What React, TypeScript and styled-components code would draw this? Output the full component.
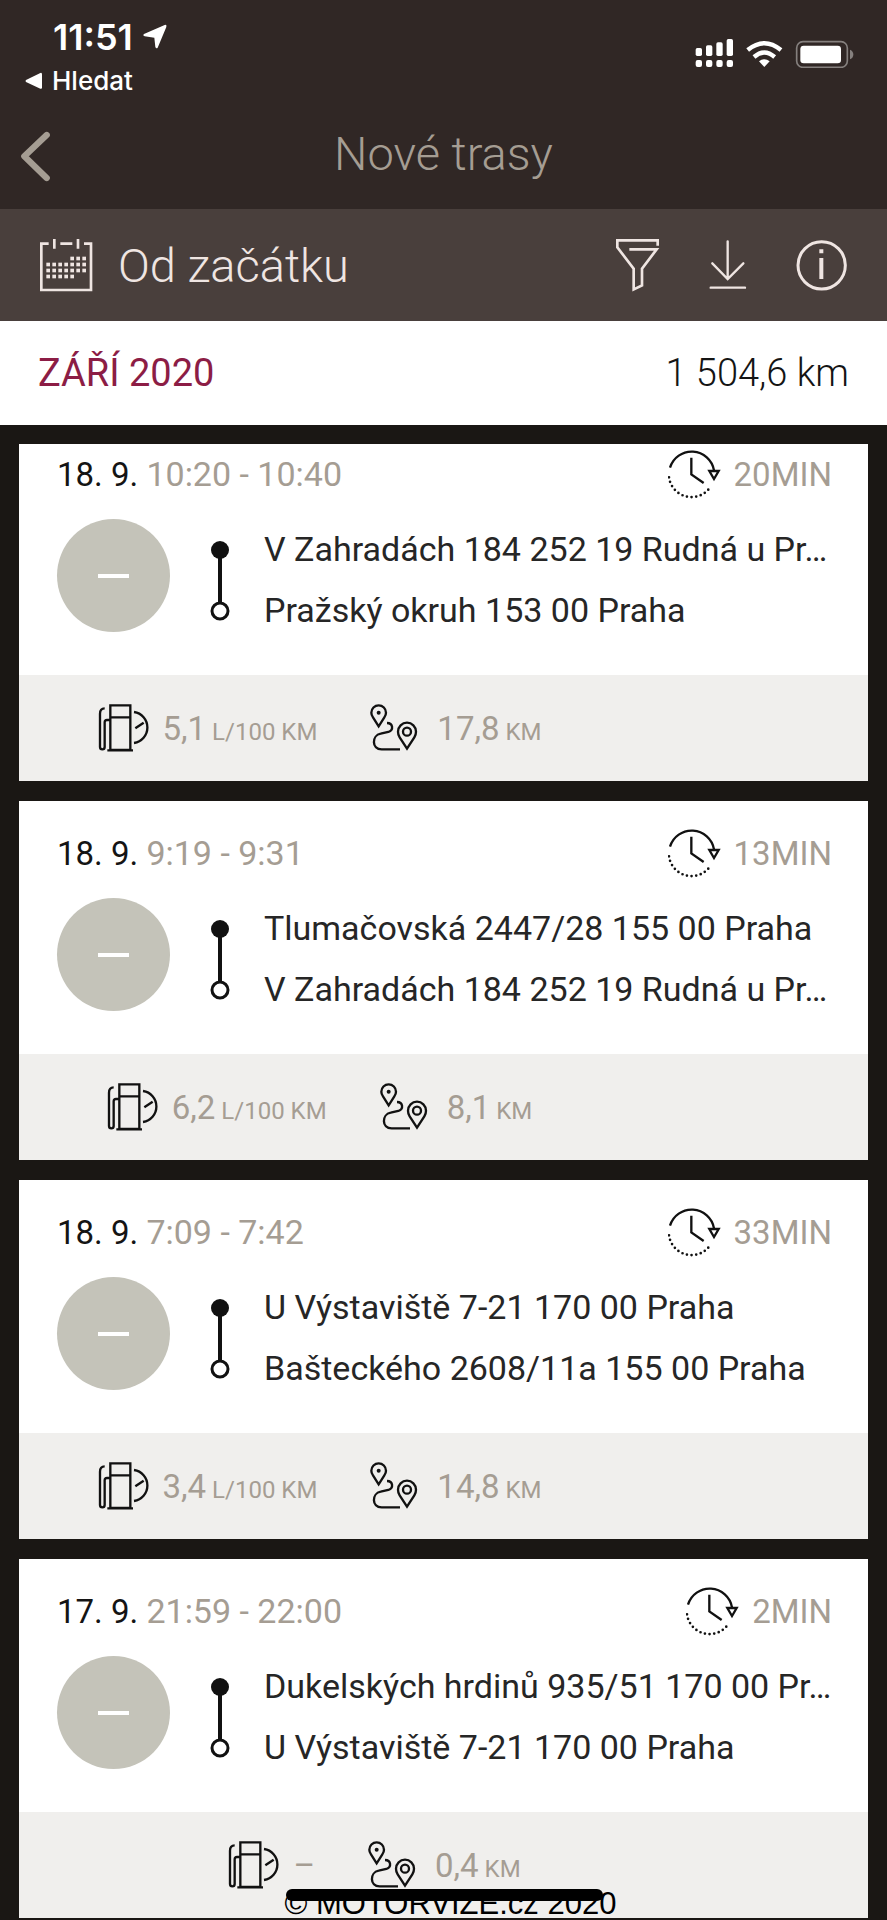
import React from 'react';
import styled, { createGlobalStyle } from 'styled-components';

const colors = {
  header: '#302725',
  toolbar: '#493f3c',
  page: '#1a1714',
  ink: '#141414',
  text: '#262626',
  muted: '#a59d93',
  accent: '#8c1d45',
  cream: '#efe5e2',
  footer: '#f0efed',
};

const GlobalStyle = createGlobalStyle`
  *, *::before, *::after { box-sizing: border-box; }
  body { margin: 0; background: ${colors.page}; font-family: Roboto, "Noto Sans", sans-serif; }
  h1, h2, p, ul { margin: 0; padding: 0; font-weight: 400; }
  ul { list-style: none; }
  button { padding: 0; border: 0; background: none; color: inherit; font: inherit; cursor: pointer; }
  svg { display: block; flex: none; }
`;

const Page = styled.div`
  position: relative;
  min-height: 100vh;
  overflow: hidden;
  background: ${colors.page};
`;

const Header = styled.header`
  background: ${colors.header};
  color: #fff;
`;

const StatusBar = styled.div`
  display: flex;
  justify-content: space-between;
  padding: 16px 32px 0 25px;
  font-family: Inter, sans-serif;
`;

const StatusLeft = styled.div`
  display: flex;
  flex-direction: column;
`;

const Clock = styled.div`
  display: flex;
  align-items: center;
  gap: 9px;
  padding-left: 28px;
  font-size: 36px;
  font-weight: 600;
  line-height: 42px;
`;

const ReturnButton = styled.button`
  display: flex;
  align-items: center;
  gap: 9px;
  font-size: 26px;
  font-weight: 500;
  line-height: 46px;
`;

const StatusIcons = styled.div`
  padding-top: 22px;
`;

const TitleBar = styled.div`
  display: grid;
  grid-template-columns: 60px 1fr 60px;
  align-items: center;
  padding: 0 20px 5px;
  color: ${colors.muted};
`;

const BackButton = styled.button`
  padding-top: 6px;
`;

const Title = styled.h1`
  font-size: 47px;
  font-weight: 300;
  line-height: 100px;
  text-align: center;
`;

const Toolbar = styled.div`
  display: flex;
  align-items: center;
  justify-content: space-between;
  padding: 0 39px;
  height: 112px;
  background: ${colors.toolbar};
  color: ${colors.cream};
`;

const RangeButton = styled.button`
  display: flex;
  align-items: center;
  gap: 25px;
  font-size: 47px;
  font-weight: 300;
`;

const Actions = styled.div`
  display: flex;
  align-items: center;
  gap: 49px;
`;

const MonthRow = styled.div`
  display: flex;
  align-items: center;
  justify-content: space-between;
  height: 104px;
  padding: 0 38px;
  background: #fff;
  font-size: 38px;
`;

const Month = styled.h2`
  color: ${colors.accent};
  font-size: 38px;
`;

const Total = styled.span`
  color: ${colors.ink};
  font-weight: 300;
`;

const TripList = styled.ul`
  display: flex;
  flex-direction: column;
  gap: 20px;
  padding: 19px 19px 2px;
`;

const Card = styled.li`
  background: #fff;
`;

const CardBody = styled.div<{ $scrolled?: boolean }>`
  padding: ${p => (p.$scrolled ? 0 : 22)}px 36px 34px 38px;
`;

const CardHead = styled.div`
  display: flex;
  align-items: center;
  justify-content: space-between;
  height: 60px;
  font-size: 33px;
`;

const TripDate = styled.span`
  color: ${colors.ink};
`;

const TripTime = styled.span`
  color: ${colors.muted};
  font-size: 34px;
`;

const Duration = styled.div`
  display: flex;
  align-items: center;
  gap: 12px;
  color: ${colors.muted};
`;

const RouteRow = styled.div`
  display: flex;
  margin-top: 15px;
  height: 122px;
`;

const Badge = styled.button`
  display: flex;
  align-items: center;
  justify-content: center;
  flex: none;
  width: 113px;
  height: 113px;
  border-radius: 50%;
  background: #c4c3b9;
`;

const BadgeDash = styled.span`
  width: 31px;
  height: 4px;
  background: #fff;
`;

const RouteLine = styled.div`
  flex: none;
  width: 94px;
  padding: 21px 0 0 40px;
`;

const Stops = styled.div`
  flex: 1;
  min-width: 0;
  color: ${colors.text};
  font-size: 34px;
  line-height: 61px;
`;

const Stop = styled.p`
  overflow: hidden;
  white-space: nowrap;
`;

const CardFooter = styled.div`
  display: flex;
  align-items: center;
  justify-content: center;
  height: 106px;
  background: ${colors.footer};
  color: ${colors.muted};
  font-size: 33px;
`;

const Metric = styled.div<{ $gap: number }>`
  display: flex;
  align-items: center;
  gap: ${p => p.$gap}px;
  margin-right: 52px;
`;

const Unit = styled.span`
  font-size: 24px;
`;

const EmptySlot = styled.div<{ $wide: boolean }>`
  width: ${p => (p.$wide ? 196 : 86)}px;
`;

const HomeIndicator = styled.div`
  position: absolute;
  z-index: 2;
  bottom: 19px;
  left: 50%;
  width: 317px;
  height: 12px;
  margin-left: -158px;
  border-radius: 6px;
  background: #000;
`;

const Copyright = styled.small`
  position: absolute;
  z-index: 1;
  right: 0;
  bottom: 0;
  left: 0;
  padding-left: 14px;
  color: #000;
  font-family: "Liberation Sans", Arial, sans-serif;
  font-size: 31px;
  line-height: 32px;
  text-align: center;
`;

const LocationIcon = () => (
  <svg width="26" height="26" viewBox="430 72 78 78" fill="currentColor" aria-hidden="true">
    <path d="M436 102L498 75Q505 73 503 81L477 143Q473 148 470 141L467 113L438 109Q431 106 436 102Z" />
  </svg>
);

const ReturnIcon = () => (
  <svg width="18" height="18" viewBox="76 216 54 54" fill="currentColor" aria-hidden="true">
    <path d="M79 240L122 219Q127 217 127 223V262Q127 268 122 266L79 246Q76 243 79 240Z" />
  </svg>
);

const StatusGlyphs = () => (
  <svg width="160" height="30" viewBox="755 114 480 90" aria-label="Signál, Wi-Fi, baterie">
    <g fill="#fff">
      <rect x="757" y="144" width="19" height="24" rx="5" />
      <rect x="788" y="136" width="19" height="32" rx="5" />
      <rect x="819" y="127" width="19" height="41" rx="5" />
      <rect x="850" y="117" width="19" height="51" rx="5" />
      {[757, 788, 819, 850].map(x => (
        <rect key={x} x={x} y="180" width="19" height="21" rx="6" />
      ))}
      <path d="M947 184Q963 171 979 184L963 201Z" />
    </g>
    <g fill="none" stroke="#fff" strokeWidth="13">
      <path d="M913 150Q963 109 1013 150" />
      <path d="M932 171Q963 144 994 171" />
    </g>
    <rect x="1060" y="125" width="152" height="77" rx="19" fill="none" stroke="#85807e" strokeWidth="5" />
    <rect x="1071" y="137" width="122" height="53" rx="10" fill="#fff" />
    <path d="M1220 149Q1230 153 1230 163.500Q1230 174 1220 178Z" fill="#85807e" />
  </svg>
);

const BackIcon = () => (
  <svg width="32" height="54" viewBox="60 390 96 162" fill="none" stroke="currentColor" strokeWidth="19" strokeLinecap="round" strokeLinejoin="round" aria-hidden="true">
    <path d="M140 405L73 469L140 534" />
  </svg>
);

const calendarRows = [
  { y: 154, from: 4, to: 6 },
  { y: 172, from: 0, to: 6 },
  { y: 190, from: 0, to: 6 },
  { y: 208, from: 0, to: 4 },
];

const CalendarIcon = () => (
  <svg width="54" height="54" viewBox="117 98 162 162" aria-hidden="true">
    <path d="M146 115H124V254H273V115H252M181 115H217M163 101V130M234 101V130" fill="none" stroke="currentColor" strokeWidth="8" />
    {calendarRows.map(row =>
      Array.from({ length: row.to - row.from + 1 }, (_, i) => (
        <rect key={`${row.y}-${i}`} x={139 + (row.from + i) * 18} y={row.y} width="11" height="11" fill="currentColor" />
      )),
    )}
  </svg>
);

const FilterIcon = () => (
  <svg width="45" height="54" viewBox="515 98 135 162" fill="none" stroke="currentColor" strokeWidth="8" aria-hidden="true">
    <path d="M643 121V105H522V126L571 190V252L596 240V190L640 132H558" />
  </svg>
);

const DownloadIcon = () => (
  <svg width="38" height="54" viewBox="800 98 114 162" fill="none" stroke="currentColor" strokeWidth="7" strokeLinecap="round" aria-hidden="true">
    <path d="M856 108V220M810 174L856 221L903 174M805 247H908" />
  </svg>
);

const InfoIcon = () => (
  <svg width="52" height="54" viewBox="1059 98 156 162" fill="none" stroke="currentColor" aria-hidden="true">
    <circle cx="1136" cy="180" r="71" strokeWidth="9" />
    <path d="M1135 158V221M1135 132V144" strokeWidth="12" />
  </svg>
);

const DurationIcon = () => (
  <svg width="54" height="50" viewBox="676 60 162 150" fill="none" stroke="#111" strokeWidth="7" aria-hidden="true">
    <path d="M682 116A68 68 0 0 1 814 124M746 86V136L783 162" />
    <path d="M800 126H828L814 150Z" />
    <path d="M679 145A68 68 0 0 0 803 174" strokeWidth="8" strokeLinecap="round" strokeDasharray="0 14" />
  </svg>
);

const FuelIcon = () => (
  <svg width="54" height="50" viewBox="300 822 162 150" fill="none" stroke="#111" strokeWidth="7" aria-hidden="true">
    <path d="M320 838Q306 838 306 854V954Q306 961 313 961Q320 961 320 954V880Q320 873 327 873H336" />
    <path d="M337 829H397V963H337ZM337 865H397M328 964H405" />
    <path d="M408 849A47 47 0 0 1 408 942M412 898L437 881" />
  </svg>
);

const DistanceIcon = () => (
  <svg width="50" height="50" viewBox="1110 822 150 150" fill="none" stroke="#111" strokeWidth="7" aria-hidden="true">
    <path d="M1139 892L1122 865Q1117 858 1117 851A22 22 0 0 1 1161 851Q1161 858 1156 865Z" />
    <circle cx="1139" cy="851" r="6" fill="#111" stroke="none" />
    <path d="M1224 959L1202 925Q1197 917 1197 908A27 27 0 0 1 1251 908Q1251 917 1246 925Z" />
    <circle cx="1224" cy="908" r="12" />
    <path d="M1164 882C1182 882 1185 903 1168 909L1145 914C1118 919 1117 961 1148 961H1203" />
  </svg>
);

const RouteIcon = () => (
  <svg width="20" height="82" viewBox="0 0 20 82" fill="none" stroke="#111" aria-hidden="true">
    <path d="M10 10V63" strokeWidth="4" />
    <circle cx="10" cy="10" r="9" fill="#111" stroke="none" />
    <circle cx="10" cy="71" r="8" strokeWidth="3" />
  </svg>
);

interface Trip {
  date: string;
  time: string;
  duration: string;
  from: string;
  to: string;
  fuel?: string;
  distance: string;
}

const trips: Trip[] = [
  { date: '18. 9.', time: '10:20 - 10:40', duration: '20MIN', from: 'V Zahradách 184 252 19 Rudná u Pr…', to: 'Pražský okruh 153 00 Praha', fuel: '5,1', distance: '17,8' },
  { date: '18. 9.', time: '9:19 - 9:31', duration: '13MIN', from: 'Tlumačovská 2447/28 155 00 Praha', to: 'V Zahradách 184 252 19 Rudná u Pr…', fuel: '6,2', distance: '8,1' },
  { date: '18. 9.', time: '7:09 - 7:42', duration: '33MIN', from: 'U Výstaviště 7-21 170 00 Praha', to: 'Bašteckého 2608/11a 155 00 Praha', fuel: '3,4', distance: '14,8' },
  { date: '17. 9.', time: '21:59 - 22:00', duration: '2MIN', from: 'Dukelských hrdinů 935/51 170 00 Pr…', to: 'U Výstaviště 7-21 170 00 Praha', distance: '0,4' },
];

const TripCard = ({ trip, scrolled }: { trip: Trip; scrolled: boolean }) => (
  <Card>
    <CardBody $scrolled={scrolled}>
      <CardHead>
        <TripDate>
          {trip.date} <TripTime>{trip.time}</TripTime>
        </TripDate>
        <Duration>
          <DurationIcon />
          {trip.duration}
        </Duration>
      </CardHead>
      <RouteRow>
        <Badge aria-label="Kategorie trasy">
          <BadgeDash />
        </Badge>
        <RouteLine>
          <RouteIcon />
        </RouteLine>
        <Stops>
          <Stop>{trip.from}</Stop>
          <Stop>{trip.to}</Stop>
        </Stops>
      </RouteRow>
    </CardBody>
    <CardFooter>
      <Metric $gap={11}>
        <FuelIcon />
        {trip.fuel ? (
          <span>
            {trip.fuel}
            <Unit> L/100 KM</Unit>
          </span>
        ) : (
          <span>–</span>
        )}
      </Metric>
      <Metric $gap={18}>
        <DistanceIcon />
        <span>
          {trip.distance}
          <Unit> KM</Unit>
        </span>
      </Metric>
      <EmptySlot $wide={Boolean(trip.fuel)} />
    </CardFooter>
  </Card>
);

export default function App() {
  return (
    <Page>
      <GlobalStyle />
      <Header>
        <StatusBar>
          <StatusLeft>
            <Clock>
              11:51
              <LocationIcon />
            </Clock>
            <ReturnButton>
              <ReturnIcon />
              Hledat
            </ReturnButton>
          </StatusLeft>
          <StatusIcons>
            <StatusGlyphs />
          </StatusIcons>
        </StatusBar>
        <TitleBar>
          <BackButton aria-label="Zpět">
            <BackIcon />
          </BackButton>
          <Title>Nové trasy</Title>
        </TitleBar>
      </Header>
      <Toolbar>
        <RangeButton>
          <CalendarIcon />
          Od začátku
        </RangeButton>
        <Actions>
          <button aria-label="Filtr">
            <FilterIcon />
          </button>
          <button aria-label="Stáhnout">
            <DownloadIcon />
          </button>
          <button aria-label="Informace">
            <InfoIcon />
          </button>
        </Actions>
      </Toolbar>
      <main>
        <MonthRow>
          <Month>ZÁŘÍ 2020</Month>
          <Total>1 504,6 km</Total>
        </MonthRow>
        <TripList>
          {trips.map((trip, i) => (
            <TripCard key={trip.date + trip.time} trip={trip} scrolled={i === 0} />
          ))}
        </TripList>
      </main>
      <HomeIndicator />
      <Copyright>© MOTORVIZE.cz 2020</Copyright>
    </Page>
  );
}
